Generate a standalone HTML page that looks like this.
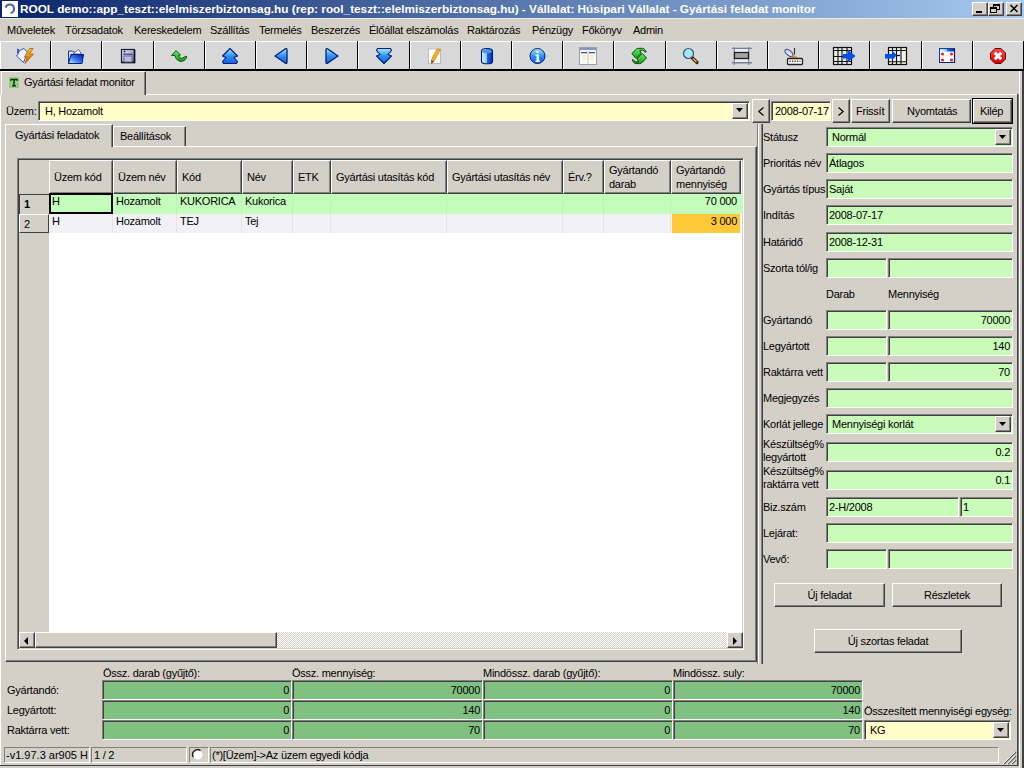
<!DOCTYPE html>
<html><head><meta charset="utf-8"><style>
*{box-sizing:border-box;margin:0;padding:0}
html,body{width:1024px;height:768px;overflow:hidden;background:#D4D0C8;font-family:"Liberation Sans",sans-serif;font-size:11px;color:#000}
.a{position:absolute}
.t{position:absolute;white-space:pre;line-height:13px;letter-spacing:-0.25px}
.btn{position:absolute;background:#D4D0C8;border-top:1px solid #fff;border-left:1px solid #fff;border-right:1px solid #404040;border-bottom:1px solid #404040;box-shadow:inset -1px -1px 0 #808080}
.sunk{position:absolute;border-top:1px solid #808080;border-left:1px solid #808080;border-right:1px solid #fff;border-bottom:1px solid #fff;box-shadow:inset 1px 1px 0 #404040}
svg{position:absolute;overflow:visible}
</style></head><body>
<div class="a" style="left:0px;top:0px;width:1024px;height:18px;background:linear-gradient(to right,#0A246A,#A6CAF0)"></div>
<div class="a" style="left:2px;top:1px;width:16px;height:16px;background:#fff"></div>
<svg style="left:2px;top:1px" width="16" height="16" viewBox="0 0 16 16"><path d="M3.6 6.6 A4.3 4.3 0 1 1 8.6 12" fill="none" stroke="#585E98" stroke-width="2"/></svg>
<div class="t" style="left:20px;top:3px;color:#fff;font-weight:bold;font-size:11.8px;letter-spacing:0">ROOL demo::app_teszt::elelmiszerbiztonsag.hu (rep: rool_teszt::elelmiszerbiztonsag.hu) - Vállalat: Húsipari Vállalat - Gyártási feladat monitor</div>
<div class="btn" style="left:972px;top:2px;width:16px;height:14px;"></div>
<div class="btn" style="left:988px;top:2px;width:16px;height:14px;"></div>
<div class="btn" style="left:1006px;top:2px;width:16px;height:14px;"></div>
<div class="a" style="left:976px;top:11px;width:6px;height:2px;background:#000"></div>
<div class="a" style="left:993px;top:4px;width:7px;height:6px;border:1px solid #000;border-top-width:2px"></div>
<div class="a" style="left:990px;top:7px;width:7px;height:6px;border:1px solid #000;border-top-width:2px;background:#D4D0C8"></div>
<svg style="left:1010px;top:5px" width="8" height="7" viewBox="0 0 8 7"><path d="M0.5 0 L7.5 7 M7.5 0 L0.5 7" stroke="#000" stroke-width="1.5"/></svg>
<div class="a" style="left:0px;top:18px;width:1024px;height:1px;background:#EAE9E2"></div>
<div class="t" style="left:7px;top:24px;">Műveletek</div>
<div class="t" style="left:65px;top:24px;">Törzsadatok</div>
<div class="t" style="left:134px;top:24px;">Kereskedelem</div>
<div class="t" style="left:210px;top:24px;">Szállítás</div>
<div class="t" style="left:259px;top:24px;">Termelés</div>
<div class="t" style="left:311px;top:24px;">Beszerzés</div>
<div class="t" style="left:369px;top:24px;">Élőállat elszámolás</div>
<div class="t" style="left:467px;top:24px;">Raktározás</div>
<div class="t" style="left:532px;top:24px;">Pénzügy</div>
<div class="t" style="left:582px;top:24px;">Főkönyv</div>
<div class="t" style="left:633px;top:24px;">Admin</div>
<div class="a" style="left:0px;top:69px;width:1024px;height:2px;background:#000"></div>
<svg width="0" height="0" style="position:absolute"><defs>
<linearGradient id="gb" x1="0" y1="0" x2="0" y2="1"><stop offset="0" stop-color="#A8E8FF"/><stop offset="0.5" stop-color="#3090F8"/><stop offset="1" stop-color="#1060E8"/></linearGradient>
<linearGradient id="gbh" x1="0" y1="0" x2="1" y2="0"><stop offset="0" stop-color="#D8F8FF"/><stop offset="0.45" stop-color="#90C8F8"/><stop offset="0.55" stop-color="#2060D0"/><stop offset="1" stop-color="#0030C0"/></linearGradient>
<linearGradient id="gg" x1="0" y1="0" x2="0" y2="1"><stop offset="0" stop-color="#60F060"/><stop offset="1" stop-color="#10A010"/></linearGradient>
<linearGradient id="go" x1="0" y1="0" x2="0" y2="1"><stop offset="0" stop-color="#FFD020"/><stop offset="1" stop-color="#C06000"/></linearGradient>
<linearGradient id="gfl" x1="0" y1="0" x2="1" y2="1"><stop offset="0" stop-color="#F4F4FF"/><stop offset="1" stop-color="#6870A8"/></linearGradient>
<linearGradient id="gfo" x1="0" y1="1" x2="1" y2="0"><stop offset="0" stop-color="#D0F8FF"/><stop offset="0.5" stop-color="#3070F0"/><stop offset="1" stop-color="#0020A8"/></linearGradient>
<linearGradient id="gr" x1="0" y1="0" x2="0" y2="1"><stop offset="0" stop-color="#FF5050"/><stop offset="1" stop-color="#D00000"/></linearGradient>
</defs></svg>
<div class="a" style="left:0px;top:41px;width:50px;height:28px;background:#D8D8D8;border-top:1px solid #fff;border-left:1px solid #fff"></div>
<div class="a" style="left:50px;top:41px;width:1px;height:29px;background:#000"></div>
<svg style="left:17px;top:48px" width="16" height="16" viewBox="0 0 16 16"><path d="M0.5 1 L2.5 2.5 L7 0.5 L10.5 4.5 L6.5 14.5 L-0.5 8 L1 6 Z" fill="#F0F2FF" stroke="#4A52A8" stroke-width="1"/><path d="M0.5 0.5 L3 2.5 L1.5 6 L0 5 Z" fill="#4858C0"/><path d="M12.5 0.5 H16 L12.5 6 H16.5 L8 15.5 L10.5 9 H7.5 Z" fill="url(#go)" stroke="#B05800" stroke-width="0.8"/></svg>
<div class="a" style="left:51px;top:41px;width:50px;height:28px;background:#D8D8D8;border-top:1px solid #fff;border-left:1px solid #fff"></div>
<div class="a" style="left:101px;top:41px;width:1px;height:29px;background:#000"></div>
<svg style="left:68px;top:48px" width="16" height="16" viewBox="0 0 16 16"><path d="M0.5 3 H4.5 L5.5 4 H7 V15.5 H0.5 Z" fill="#C8E4FF" stroke="#203890"/><path d="M5 6 L10.5 1.5 L13.5 6 Z" fill="#FFFFFF" stroke="#404880" stroke-width="0.8"/><path d="M0.5 15.5 L3 6.5 H15.5 L14 15.5 Z" fill="url(#gfo)" stroke="#001880"/></svg>
<div class="a" style="left:102px;top:41px;width:51px;height:28px;background:#D8D8D8;border-top:1px solid #fff;border-left:1px solid #fff"></div>
<div class="a" style="left:153px;top:41px;width:1px;height:29px;background:#000"></div>
<svg style="left:119px;top:48px" width="16" height="16" viewBox="0 0 16 16"><rect x="2.5" y="1.5" width="13" height="13" fill="url(#gfl)" stroke="#181838" stroke-width="1.2"/><path d="M15.5 2 V14.5 H2.5" fill="none" stroke="#0A0A20" stroke-width="1.6"/><rect x="5" y="8" width="8" height="6" fill="#B8BCD8" stroke="#58608C" stroke-width="0.8"/><rect x="4" y="5.5" width="10" height="1.5" fill="#585E90"/><circle cx="5.5" cy="3.5" r="1.1" fill="#303050"/></svg>
<div class="a" style="left:154px;top:41px;width:50px;height:28px;background:#D8D8D8;border-top:1px solid #fff;border-left:1px solid #fff"></div>
<div class="a" style="left:204px;top:41px;width:1px;height:29px;background:#000"></div>
<svg style="left:171px;top:48px" width="16" height="16" viewBox="0 0 16 16"><path d="M0.5 7.5 L5 2.5 L9.5 7 L7.5 7.5 Q8.5 10.5 11 10.5 L15 8 L16 9 Q13.5 13.5 10.5 13.5 Q5 13 4 7.5 Z" fill="url(#gg)" stroke="#004800" stroke-width="0.9"/></svg>
<div class="a" style="left:205px;top:41px;width:50px;height:28px;background:#D8D8D8;border-top:1px solid #fff;border-left:1px solid #fff"></div>
<div class="a" style="left:255px;top:41px;width:1px;height:29px;background:#000"></div>
<svg style="left:222px;top:48px" width="16" height="16" viewBox="0 0 16 16"><path d="M8 0.5 L15.5 8 L12 9.5 L15.5 13.5 L14.5 15.5 H1.5 L0.5 13.5 L4 9.5 L0.5 8 Z" fill="url(#gb)" stroke="#002070" stroke-width="1.1" stroke-linejoin="round"/></svg>
<div class="a" style="left:256px;top:41px;width:50px;height:28px;background:#D8D8D8;border-top:1px solid #fff;border-left:1px solid #fff"></div>
<div class="a" style="left:306px;top:41px;width:1px;height:29px;background:#000"></div>
<svg style="left:273px;top:48px" width="16" height="16" viewBox="0 0 16 16"><path d="M2 8 L12.5 0.8 Q14 0 14 2 V14 Q14 16 12.5 15.2 Z" fill="url(#gb)" stroke="#002070" stroke-width="1.3" stroke-linejoin="round"/></svg>
<div class="a" style="left:307px;top:41px;width:50px;height:28px;background:#D8D8D8;border-top:1px solid #fff;border-left:1px solid #fff"></div>
<div class="a" style="left:357px;top:41px;width:1px;height:29px;background:#000"></div>
<svg style="left:324px;top:48px" width="16" height="16" viewBox="0 0 16 16"><path d="M14 8 L3.5 0.8 Q2 0 2 2 V14 Q2 16 3.5 15.2 Z" fill="url(#gb)" stroke="#002070" stroke-width="1.3" stroke-linejoin="round"/></svg>
<div class="a" style="left:358px;top:41px;width:51px;height:28px;background:#D8D8D8;border-top:1px solid #fff;border-left:1px solid #fff"></div>
<div class="a" style="left:409px;top:41px;width:1px;height:29px;background:#000"></div>
<svg style="left:376px;top:48px" width="16" height="16" viewBox="0 0 16 16"><path d="M8 15.5 L15.5 8 L12 6.5 L15.5 2.5 L14.5 0.5 H1.5 L0.5 2.5 L4 6.5 L0.5 8 Z" fill="url(#gb)" stroke="#002070" stroke-width="1.1" stroke-linejoin="round"/></svg>
<div class="a" style="left:410px;top:41px;width:50px;height:28px;background:#D8D8D8;border-top:1px solid #fff;border-left:1px solid #fff"></div>
<div class="a" style="left:460px;top:41px;width:1px;height:29px;background:#000"></div>
<svg style="left:427px;top:48px" width="16" height="16" viewBox="0 0 16 16"><rect x="1.5" y="1" width="12" height="14.5" fill="#FFFFFF" stroke="#B0B0C0" stroke-width="0.8"/><path d="M10 1 L13.5 1.5 L7 13.5 L4 12.5 Z" fill="#F8B020" stroke="#C07000" stroke-width="0.6"/><path d="M4 12.5 L7 13.5 L4.5 16 Z" fill="#504030"/></svg>
<div class="a" style="left:461px;top:41px;width:50px;height:28px;background:#D8D8D8;border-top:1px solid #fff;border-left:1px solid #fff"></div>
<div class="a" style="left:511px;top:41px;width:1px;height:29px;background:#000"></div>
<svg style="left:478px;top:48px" width="16" height="16" viewBox="0 0 16 16"><path d="M3.5 3 Q3.5 0.5 9 0.5 Q14.5 0.5 14.5 3 V13.5 Q14.5 15.8 9 15.8 Q3.5 15.8 3.5 13.5 Z" fill="url(#gbh)" stroke="#001870" stroke-width="1.1"/><ellipse cx="9" cy="3.3" rx="4.8" ry="2" fill="#4898F0"/></svg>
<div class="a" style="left:512px;top:41px;width:50px;height:28px;background:#D8D8D8;border-top:1px solid #fff;border-left:1px solid #fff"></div>
<div class="a" style="left:562px;top:41px;width:1px;height:29px;background:#000"></div>
<svg style="left:529px;top:48px" width="16" height="16" viewBox="0 0 16 16"><circle cx="8.5" cy="8" r="7.5" fill="url(#gb)" stroke="#002070" stroke-width="1"/><circle cx="8.5" cy="4" r="1.3" fill="#E0F8FF"/><path d="M6.5 6.5 H10 V12.5 H11 V14 H6.5 V12.5 H7.5 V8 H6.5 Z" fill="#E8FCFF"/></svg>
<div class="a" style="left:563px;top:41px;width:50px;height:28px;background:#D8D8D8;border-top:1px solid #fff;border-left:1px solid #fff"></div>
<div class="a" style="left:613px;top:41px;width:1px;height:29px;background:#000"></div>
<svg style="left:580px;top:48px" width="16" height="16" viewBox="0 0 16 16"><rect x="-0.5" y="-0.5" width="17" height="17" fill="#FBFAF0" stroke="#98A0B8" stroke-width="1"/><rect x="0" y="0" width="16" height="2" fill="#8098C8"/><rect x="1" y="4" width="6" height="1.3" fill="#505878"/><rect x="9" y="4" width="6" height="1.3" fill="#505878"/><rect x="7.5" y="2.5" width="1" height="13.5" fill="#C0C0B8"/><path d="M2 8 H6 M2 11 H6 M10 8 H14 M10 11 H14" stroke="#E8E0D0" stroke-width="1"/></svg>
<div class="a" style="left:614px;top:41px;width:51px;height:28px;background:#D8D8D8;border-top:1px solid #fff;border-left:1px solid #fff"></div>
<div class="a" style="left:665px;top:41px;width:1px;height:29px;background:#000"></div>
<svg style="left:631px;top:48px" width="16" height="16" viewBox="0 0 16 16"><path d="M0.8 5.5 L5.5 1 Q6.5 0.3 8 0.3 H11.5 Q12.5 0.3 13.2 1 L15.3 3.8 L14.2 4.3 L12 2.2 H8.8 L10.2 5.5 L5 10.5 Z" fill="url(#gg)" stroke="#003800" stroke-width="0.9" stroke-linejoin="round"/><path d="M15.5 10 L10.8 14.8 Q9.8 15.6 8.3 15.6 H4.8 Q3.8 15.6 3.1 14.8 L1 12 L2.1 11.6 L4.3 13.8 H7.5 L6.1 10.5 L11.3 5.5 Z" fill="url(#gg)" stroke="#003800" stroke-width="0.9" stroke-linejoin="round"/></svg>
<div class="a" style="left:666px;top:41px;width:50px;height:28px;background:#D8D8D8;border-top:1px solid #fff;border-left:1px solid #fff"></div>
<div class="a" style="left:716px;top:41px;width:1px;height:29px;background:#000"></div>
<svg style="left:682px;top:48px" width="16" height="16" viewBox="0 0 16 16"><path d="M10.5 10 L15 14.5" stroke="#402000" stroke-width="3.2" stroke-linecap="round"/><path d="M11 10.5 L14.5 14" stroke="#E8B878" stroke-width="1.3"/><circle cx="6.5" cy="5.5" r="5" fill="#A8E4F8" stroke="#305868" stroke-width="1.2"/></svg>
<div class="a" style="left:717px;top:41px;width:50px;height:28px;background:#D8D8D8;border-top:1px solid #fff;border-left:1px solid #fff"></div>
<div class="a" style="left:767px;top:41px;width:1px;height:29px;background:#000"></div>
<svg style="left:733px;top:48px" width="16" height="16" viewBox="0 0 16 16"><rect x="1.5" y="1" width="14" height="13" fill="#ECECF4"/><path d="M1.3 -1 V17 M15.6 -1 V17" stroke="#8088A8" stroke-width="1.2"/><path d="M-1 0.4 H19 M-1 14.7 H19" stroke="#787C98" stroke-width="1.4"/><rect x="1.5" y="4.5" width="14" height="6" fill="#A4A4A0" stroke="#202020" stroke-width="1.3"/></svg>
<div class="a" style="left:768px;top:41px;width:50px;height:28px;background:#D8D8D8;border-top:1px solid #fff;border-left:1px solid #fff"></div>
<div class="a" style="left:818px;top:41px;width:1px;height:29px;background:#000"></div>
<svg style="left:784px;top:48px" width="16" height="16" viewBox="0 0 16 16"><ellipse cx="5" cy="5" rx="4.8" ry="2.4" transform="rotate(40 5 5)" fill="#D8E0F8" stroke="#3A4A90" stroke-width="1"/><path d="M10.5 0 V6.5" stroke="#303030" stroke-width="1.1"/><path d="M7 10.5 Q10.5 4.5 14.5 10.5 Z" fill="#F09830"/><rect x="3.5" y="10.5" width="15" height="6" rx="1" fill="#FFFFFF" stroke="#202020" stroke-width="1.3"/><path d="M5.5 13.2 H16.5" stroke="#404040" stroke-width="1.4" stroke-dasharray="1.3 1.2"/></svg>
<div class="a" style="left:819px;top:41px;width:50px;height:28px;background:#D8D8D8;border-top:1px solid #fff;border-left:1px solid #fff"></div>
<div class="a" style="left:869px;top:41px;width:1px;height:29px;background:#000"></div>
<svg style="left:836px;top:48px" width="16" height="16" viewBox="0 0 16 16"><rect x="-2.5" y="-0.5" width="18" height="17" fill="#EAEAE4" stroke="#101010" stroke-width="1.2"/><path d="M-2.5 2.5 H15.5 M-2.5 8.5 H15.5 M-2.5 13.5 H15.5 M6 -0.5 V16.5 M11 -0.5 V16.5 M2 -0.5 V16.5" stroke="#101010" stroke-width="1.1"/><path d="M7 6 H12 V2 L19.5 8 L12 14 V10.5 H7 Z" fill="#0050F0"/></svg>
<div class="a" style="left:870px;top:41px;width:51px;height:28px;background:#D8D8D8;border-top:1px solid #fff;border-left:1px solid #fff"></div>
<div class="a" style="left:921px;top:41px;width:1px;height:29px;background:#000"></div>
<svg style="left:887px;top:48px" width="16" height="16" viewBox="0 0 16 16"><rect x="1.5" y="-0.5" width="18" height="17" fill="#F2F2EC" stroke="#101010" stroke-width="1.2"/><path d="M1.5 2.5 H19.5 M1.5 13.8 H19.5 M9.5 -0.5 V16.5 M14 -0.5 V16.5 M5.5 -0.5 V16.5" stroke="#101010" stroke-width="1.1"/><path d="M9.5 7.5 H13" stroke="#101010" stroke-width="1.2"/><path d="M-2 6 H5 V2.2 L9.8 7.3 L5 12.3 V10.4 H-2 Z" fill="#0050F0"/></svg>
<div class="a" style="left:922px;top:41px;width:50px;height:28px;background:#D8D8D8;border-top:1px solid #fff;border-left:1px solid #fff"></div>
<div class="a" style="left:972px;top:41px;width:1px;height:29px;background:#000"></div>
<svg style="left:938px;top:48px" width="16" height="16" viewBox="0 0 16 16"><rect x="1.5" y="0.5" width="15" height="14" fill="#FFFFFF" stroke="#1838A8" stroke-width="1"/><rect x="2" y="1" width="14" height="2.5" fill="url(#gbh)"/><path d="M16.5 0.5 V14.5 H1.5" fill="none" stroke="#102070" stroke-width="1.2"/><circle cx="4.5" cy="6" r="1.6" fill="#D83020"/><circle cx="13.5" cy="6" r="1.6" fill="#D83020"/><circle cx="4.5" cy="12" r="1.6" fill="#D03020"/><circle cx="13.5" cy="12" r="1.6" fill="#D03020"/></svg>
<div class="a" style="left:973px;top:41px;width:50px;height:28px;background:#D8D8D8;border-top:1px solid #fff;border-left:1px solid #fff"></div>
<div class="a" style="left:1023px;top:41px;width:1px;height:29px;background:#000"></div>
<svg style="left:990px;top:48px" width="16" height="16" viewBox="0 0 16 16"><path d="M5 0.5 H11 L15.5 5 V11 L11 15.5 H5 L0.5 11 V5 Z" fill="url(#gr)" stroke="#700000" stroke-width="1"/><path d="M4.8 4.8 L11.2 11.2 M11.2 4.8 L4.8 11.2" stroke="#FFFFFF" stroke-width="3"/></svg>
<div class="a" style="left:0px;top:71px;width:1024px;height:697px;background:#D4D0C8"></div>
<div class="a" style="left:1px;top:71px;width:145px;height:24px;border-top:1px solid #fff;border-left:1px solid #fff;border-right:1px solid #404040;box-shadow:inset -1px 0 0 #808080"></div>
<div class="a" style="left:146px;top:94px;width:871px;height:1px;background:#fff"></div>
<svg style="left:9px;top:77px" width="10" height="11" viewBox="0 0 10 11"><rect width="10" height="11" fill="#90CC80"/><path d="M1.8 2.5 H8.2 M5 2.5 V8.8 M3.2 8.8 H6.8" stroke="#003000" stroke-width="1.4" fill="none"/><path d="M1.8 2 V4 M8.2 2 V4" stroke="#003000" stroke-width="1"/></svg>
<div class="t" style="left:24px;top:76px;">Gyártási feladat monitor</div>
<div class="a" style="left:1017px;top:94px;width:1px;height:672px;background:#404040"></div>
<div class="a" style="left:1018px;top:94px;width:1px;height:672px;background:#808080"></div>
<div class="a" style="left:1019px;top:71px;width:1px;height:697px;background:#fff"></div>
<div class="a" style="left:1022px;top:71px;width:2px;height:697px;background:#404040"></div>
<div class="a" style="left:0px;top:765px;width:1018px;height:1px;background:#404040"></div>
<div class="a" style="left:0px;top:95px;width:1px;height:670px;background:#fff"></div>
<div class="t" style="left:6px;top:105px;">Üzem:</div>
<div class="sunk" style="left:38px;top:101px;width:712px;height:20px;background:#FFFDC8;"></div>
<div class="t" style="left:45px;top:105px;">H, Hozamolt</div>
<div class="btn" style="left:732px;top:103px;width:16px;height:16px;"></div>
<svg style="left:736px;top:108px" width="8" height="5" viewBox="0 0 8 5"><path d="M0 0 H7 L3.5 4 Z" fill="#000"/></svg>
<div class="btn" style="left:752px;top:99px;width:18px;height:24px;"></div>
<svg style="left:758px;top:107px" width="6" height="9" viewBox="0 0 6 9"><path d="M5.5 0.5 L0.8 4.5 L5.5 8.5" fill="none" stroke="#000" stroke-width="1.1"/></svg>
<div class="sunk" style="left:771px;top:101px;width:60px;height:20px;background:#FFFDC8;"></div>
<div class="t" style="left:775px;top:105px;">2008-07-17</div>
<div class="btn" style="left:832px;top:99px;width:18px;height:24px;"></div>
<svg style="left:838px;top:107px" width="6" height="9" viewBox="0 0 6 9"><path d="M0.5 0.5 L5.2 4.5 L0.5 8.5" fill="none" stroke="#000" stroke-width="1.1"/></svg>
<div class="btn" style="left:851px;top:99px;width:39px;height:24px;"></div>
<div class="t" style="left:856px;top:105px;">Frissít</div>
<div class="btn" style="left:892px;top:99px;width:79px;height:24px;"></div>
<div class="t" style="left:907px;top:105px;">Nyomtatás</div>
<div class="a" style="left:972px;top:98px;width:41px;height:26px;border:1px solid #000"></div>
<div class="btn" style="left:973px;top:99px;width:39px;height:24px;"></div>
<div class="t" style="left:980px;top:105px;">Kilép</div>
<div class="a" style="left:5px;top:146px;width:752px;height:516px;border-top:1px solid #fff;border-left:1px solid #fff;border-right:1px solid #404040;border-bottom:1px solid #404040;box-shadow:inset -1px -1px 0 #808080"></div>
<div class="a" style="left:5px;top:124px;width:108px;height:23px;background:#D4D0C8;border-top:1px solid #fff;border-left:1px solid #fff;border-right:1px solid #404040;box-shadow:inset -1px 0 0 #808080"></div>
<div class="t" style="left:15px;top:129px;">Gyártási feladatok</div>
<div class="a" style="left:113px;top:126px;width:73px;height:20px;background:#D4D0C8;border-top:1px solid #fff;border-left:1px solid #fff;border-right:1px solid #404040;box-shadow:inset -1px 0 0 #808080"></div>
<div class="t" style="left:120px;top:130px;">Beállítások</div>
<div class="a" style="left:757px;top:124px;width:1px;height:540px;background:#808080"></div>
<div class="a" style="left:758px;top:124px;width:1px;height:540px;background:#fff"></div>
<div class="a" style="left:761px;top:124px;width:1px;height:540px;background:#808080"></div>
<div class="a" style="left:762px;top:124px;width:1px;height:540px;background:#404040"></div>
<div class="a" style="left:17px;top:158px;width:727px;height:492px;background:#fff;border-top:1px solid #808080;border-left:1px solid #808080;border-right:1px solid #fff;border-bottom:1px solid #fff;box-shadow:inset 1px 1px 0 #404040,inset -1px -1px 0 #D4D0C8"></div>
<div class="a" style="left:19px;top:160px;width:30px;height:472px;background:#D4D0C8"></div>
<div class="a" style="left:19px;top:160px;width:722px;height:34px;background:#D4D0C8"></div>
<div class="a" style="left:49px;top:160px;width:64px;height:34px;border-top:1px solid #fff;border-left:1px solid #fff;border-right:1px solid #404040;border-bottom:1px solid #404040;box-shadow:inset -1px -1px 0 #808080"></div>
<div class="t" style="left:54px;top:171px;">Üzem kód</div>
<div class="a" style="left:113px;top:160px;width:64px;height:34px;border-top:1px solid #fff;border-left:1px solid #fff;border-right:1px solid #404040;border-bottom:1px solid #404040;box-shadow:inset -1px -1px 0 #808080"></div>
<div class="t" style="left:118px;top:171px;">Üzem név</div>
<div class="a" style="left:177px;top:160px;width:65px;height:34px;border-top:1px solid #fff;border-left:1px solid #fff;border-right:1px solid #404040;border-bottom:1px solid #404040;box-shadow:inset -1px -1px 0 #808080"></div>
<div class="t" style="left:182px;top:171px;">Kód</div>
<div class="a" style="left:242px;top:160px;width:51px;height:34px;border-top:1px solid #fff;border-left:1px solid #fff;border-right:1px solid #404040;border-bottom:1px solid #404040;box-shadow:inset -1px -1px 0 #808080"></div>
<div class="t" style="left:247px;top:171px;">Név</div>
<div class="a" style="left:293px;top:160px;width:38px;height:34px;border-top:1px solid #fff;border-left:1px solid #fff;border-right:1px solid #404040;border-bottom:1px solid #404040;box-shadow:inset -1px -1px 0 #808080"></div>
<div class="t" style="left:298px;top:171px;">ETK</div>
<div class="a" style="left:331px;top:160px;width:116px;height:34px;border-top:1px solid #fff;border-left:1px solid #fff;border-right:1px solid #404040;border-bottom:1px solid #404040;box-shadow:inset -1px -1px 0 #808080"></div>
<div class="t" style="left:336px;top:171px;">Gyártási utasítás kód</div>
<div class="a" style="left:447px;top:160px;width:116px;height:34px;border-top:1px solid #fff;border-left:1px solid #fff;border-right:1px solid #404040;border-bottom:1px solid #404040;box-shadow:inset -1px -1px 0 #808080"></div>
<div class="t" style="left:452px;top:171px;">Gyártási utasítás név</div>
<div class="a" style="left:563px;top:160px;width:41px;height:34px;border-top:1px solid #fff;border-left:1px solid #fff;border-right:1px solid #404040;border-bottom:1px solid #404040;box-shadow:inset -1px -1px 0 #808080"></div>
<div class="t" style="left:568px;top:171px;">Érv.?</div>
<div class="a" style="left:604px;top:160px;width:67px;height:34px;border-top:1px solid #fff;border-left:1px solid #fff;border-right:1px solid #404040;border-bottom:1px solid #404040;box-shadow:inset -1px -1px 0 #808080"></div>
<div class="t" style="left:609px;top:164px;">Gyártandó</div>
<div class="t" style="left:609px;top:178px;">darab</div>
<div class="a" style="left:671px;top:160px;width:70px;height:34px;border-top:1px solid #fff;border-left:1px solid #fff;border-right:1px solid #404040;border-bottom:1px solid #404040;box-shadow:inset -1px -1px 0 #808080"></div>
<div class="t" style="left:676px;top:164px;">Gyártandó</div>
<div class="t" style="left:676px;top:178px;">mennyiség</div>
<div class="a" style="left:49px;top:194px;width:694px;height:20px;background:#C4FCBC"></div>
<div class="a" style="left:49px;top:214px;width:692px;height:19px;background:#F2F2F6"></div>
<div class="a" style="left:112px;top:214px;width:1px;height:19px;background:#E4E4E4"></div>
<div class="a" style="left:112px;top:194px;width:1px;height:20px;background:#BCF4B4"></div>
<div class="a" style="left:176px;top:214px;width:1px;height:19px;background:#E4E4E4"></div>
<div class="a" style="left:176px;top:194px;width:1px;height:20px;background:#BCF4B4"></div>
<div class="a" style="left:241px;top:214px;width:1px;height:19px;background:#E4E4E4"></div>
<div class="a" style="left:241px;top:194px;width:1px;height:20px;background:#BCF4B4"></div>
<div class="a" style="left:292px;top:214px;width:1px;height:19px;background:#E4E4E4"></div>
<div class="a" style="left:292px;top:194px;width:1px;height:20px;background:#BCF4B4"></div>
<div class="a" style="left:330px;top:214px;width:1px;height:19px;background:#E4E4E4"></div>
<div class="a" style="left:330px;top:194px;width:1px;height:20px;background:#BCF4B4"></div>
<div class="a" style="left:446px;top:214px;width:1px;height:19px;background:#E4E4E4"></div>
<div class="a" style="left:446px;top:194px;width:1px;height:20px;background:#BCF4B4"></div>
<div class="a" style="left:562px;top:214px;width:1px;height:19px;background:#E4E4E4"></div>
<div class="a" style="left:562px;top:194px;width:1px;height:20px;background:#BCF4B4"></div>
<div class="a" style="left:603px;top:214px;width:1px;height:19px;background:#E4E4E4"></div>
<div class="a" style="left:603px;top:194px;width:1px;height:20px;background:#BCF4B4"></div>
<div class="a" style="left:670px;top:214px;width:1px;height:19px;background:#E4E4E4"></div>
<div class="a" style="left:670px;top:194px;width:1px;height:20px;background:#BCF4B4"></div>
<div class="a" style="left:672px;top:214px;width:68px;height:19px;background:#FFC838"></div>
<div class="a" style="left:19px;top:194px;width:30px;height:1px;background:#404040"></div>
<div class="a" style="left:19px;top:194px;width:1px;height:20px;background:#404040"></div>
<div class="a" style="left:19px;top:214px;width:30px;height:19px;border-top:1px solid #fff;border-left:1px solid #fff;border-right:1px solid #404040;border-bottom:1px solid #404040"></div>
<div class="t" style="left:24px;top:198px;font-weight:bold">1</div>
<div class="t" style="left:24px;top:218px;">2</div>
<div class="a" style="left:49px;top:193px;width:64px;height:21px;border:2px solid #000"></div>
<div class="t" style="left:52px;top:195px;">H</div>
<div class="t" style="left:52px;top:215px;">H</div>
<div class="t" style="left:116px;top:195px;">Hozamolt</div>
<div class="t" style="left:116px;top:215px;">Hozamolt</div>
<div class="t" style="left:180px;top:195px;">KUKORICA</div>
<div class="t" style="left:180px;top:215px;">TEJ</div>
<div class="t" style="left:245px;top:195px;">Kukorica</div>
<div class="t" style="left:245px;top:215px;">Tej</div>
<div class="t" style="left:640px;top:195px;width:97px;text-align:right">70 000</div>
<div class="t" style="left:640px;top:215px;width:97px;text-align:right">3 000</div>
<div class="a" style="left:20px;top:632px;width:722px;height:16px;background:repeating-conic-gradient(#D4D0C8 0 25%,#fff 0 50%) 0 0/2px 2px"></div>
<div class="btn" style="left:19px;top:632px;width:16px;height:16px;"></div>
<svg style="left:24px;top:637px" width="5" height="8" viewBox="0 0 5 8"><path d="M4 0 V8 L0 4 Z" fill="#000"/></svg>
<div class="btn" style="left:35px;top:632px;width:242px;height:16px;"></div>
<div class="btn" style="left:727px;top:632px;width:16px;height:16px;"></div>
<svg style="left:733px;top:637px" width="5" height="8" viewBox="0 0 5 8"><path d="M0 0 V8 L4 4 Z" fill="#000"/></svg>
<div class="t" style="left:763px;top:131px;">Státusz</div>
<div class="sunk" style="left:826px;top:127px;width:187px;height:20px;background:#C8FCB8;"></div>
<div class="t" style="left:832px;top:131px;">Normál</div>
<div class="btn" style="left:995px;top:129px;width:16px;height:16px;"></div>
<svg style="left:999px;top:135px" width="8" height="5" viewBox="0 0 8 5"><path d="M0 0 H7 L3.5 4 Z" fill="#000"/></svg>
<div class="t" style="left:763px;top:157px;">Prioritás név</div>
<div class="sunk" style="left:826px;top:153px;width:187px;height:20px;background:#C8FCB8;"></div>
<div class="t" style="left:829px;top:157px;">Átlagos</div>
<div class="t" style="left:763px;top:183px;">Gyártás típus</div>
<div class="sunk" style="left:826px;top:179px;width:187px;height:20px;background:#C8FCB8;"></div>
<div class="t" style="left:829px;top:183px;">Saját</div>
<div class="t" style="left:763px;top:209px;">Indítás</div>
<div class="sunk" style="left:826px;top:205px;width:187px;height:20px;background:#C8FCB8;"></div>
<div class="t" style="left:829px;top:209px;">2008-07-17</div>
<div class="t" style="left:763px;top:236px;">Határidő</div>
<div class="sunk" style="left:826px;top:232px;width:187px;height:20px;background:#C8FCB8;"></div>
<div class="t" style="left:829px;top:236px;">2008-12-31</div>
<div class="t" style="left:763px;top:262px;">Szorta tól/ig</div>
<div class="sunk" style="left:826px;top:258px;width:61px;height:20px;background:#C8FCB8;"></div>
<div class="sunk" style="left:888px;top:258px;width:125px;height:20px;background:#C8FCB8;"></div>
<div class="t" style="left:826px;top:288px;">Darab</div>
<div class="t" style="left:888px;top:288px;">Mennyiség</div>
<div class="t" style="left:763px;top:314px;">Gyártandó</div>
<div class="sunk" style="left:826px;top:310px;width:61px;height:20px;background:#C8FCB8;"></div>
<div class="sunk" style="left:888px;top:310px;width:125px;height:20px;background:#C8FCB8;"></div>
<div class="t" style="left:888px;top:314px;width:122px;text-align:right">70000</div>
<div class="t" style="left:763px;top:340px;">Legyártott</div>
<div class="sunk" style="left:826px;top:336px;width:61px;height:20px;background:#C8FCB8;"></div>
<div class="sunk" style="left:888px;top:336px;width:125px;height:20px;background:#C8FCB8;"></div>
<div class="t" style="left:888px;top:340px;width:122px;text-align:right">140</div>
<div class="t" style="left:763px;top:366px;">Raktárra vett</div>
<div class="sunk" style="left:826px;top:362px;width:61px;height:20px;background:#C8FCB8;"></div>
<div class="sunk" style="left:888px;top:362px;width:125px;height:20px;background:#C8FCB8;"></div>
<div class="t" style="left:888px;top:366px;width:122px;text-align:right">70</div>
<div class="t" style="left:763px;top:392px;">Megjegyzés</div>
<div class="sunk" style="left:826px;top:388px;width:187px;height:20px;background:#C8FCB8;"></div>
<div class="t" style="left:763px;top:418px;">Korlát jellege</div>
<div class="sunk" style="left:826px;top:414px;width:187px;height:20px;background:#C8FCB8;"></div>
<div class="t" style="left:832px;top:418px;">Mennyiségi korlát</div>
<div class="btn" style="left:995px;top:416px;width:16px;height:16px;"></div>
<svg style="left:999px;top:422px" width="8" height="5" viewBox="0 0 8 5"><path d="M0 0 H7 L3.5 4 Z" fill="#000"/></svg>
<div class="t" style="left:763px;top:438px;line-height:13px">Készültség%
legyártott</div>
<div class="sunk" style="left:826px;top:442px;width:187px;height:20px;background:#C8FCB8;"></div>
<div class="t" style="left:826px;top:446px;width:184px;text-align:right">0.2</div>
<div class="t" style="left:763px;top:465px;line-height:13px">Készültség%
raktárra vett</div>
<div class="sunk" style="left:826px;top:470px;width:187px;height:20px;background:#C8FCB8;"></div>
<div class="t" style="left:826px;top:474px;width:184px;text-align:right">0.1</div>
<div class="t" style="left:763px;top:501px;">Biz.szám</div>
<div class="sunk" style="left:826px;top:497px;width:133px;height:20px;background:#C8FCB8;"></div>
<div class="t" style="left:829px;top:501px;">2-H/2008</div>
<div class="sunk" style="left:960px;top:497px;width:53px;height:20px;background:#C8FCB8;"></div>
<div class="t" style="left:963px;top:501px;">1</div>
<div class="t" style="left:763px;top:527px;">Lejárat:</div>
<div class="sunk" style="left:826px;top:523px;width:187px;height:20px;background:#C8FCB8;"></div>
<div class="t" style="left:763px;top:553px;">Vevő:</div>
<div class="sunk" style="left:826px;top:549px;width:61px;height:20px;background:#C8FCB8;"></div>
<div class="sunk" style="left:888px;top:549px;width:125px;height:20px;background:#C8FCB8;"></div>
<div class="btn" style="left:774px;top:583px;width:111px;height:24px;"></div>
<div class="t" style="left:774px;top:589px;width:111px;text-align:center">Új feladat</div>
<div class="btn" style="left:892px;top:583px;width:110px;height:24px;"></div>
<div class="t" style="left:892px;top:589px;width:110px;text-align:center">Részletek</div>
<div class="btn" style="left:814px;top:629px;width:148px;height:24px;"></div>
<div class="t" style="left:814px;top:635px;width:148px;text-align:center">Új szortas feladat</div>
<div class="t" style="left:103px;top:667px;">Össz. darab (gyűjtő):</div>
<div class="t" style="left:292px;top:667px;">Össz. mennyiség:</div>
<div class="t" style="left:483px;top:667px;">Mindössz. darab (gyűjtő):</div>
<div class="t" style="left:673px;top:667px;">Mindössz. suly:</div>
<div class="t" style="left:7px;top:684px;">Gyártandó:</div>
<div class="sunk" style="left:102px;top:680px;width:190px;height:20px;background:#80C080;"></div>
<div class="t" style="left:102px;top:684px;width:187px;text-align:right">0</div>
<div class="sunk" style="left:292px;top:680px;width:191px;height:20px;background:#80C080;"></div>
<div class="t" style="left:292px;top:684px;width:188px;text-align:right">70000</div>
<div class="sunk" style="left:483px;top:680px;width:190px;height:20px;background:#80C080;"></div>
<div class="t" style="left:483px;top:684px;width:187px;text-align:right">0</div>
<div class="sunk" style="left:673px;top:680px;width:190px;height:20px;background:#80C080;"></div>
<div class="t" style="left:673px;top:684px;width:187px;text-align:right">70000</div>
<div class="t" style="left:7px;top:704px;">Legyártott:</div>
<div class="sunk" style="left:102px;top:700px;width:190px;height:20px;background:#80C080;"></div>
<div class="t" style="left:102px;top:704px;width:187px;text-align:right">0</div>
<div class="sunk" style="left:292px;top:700px;width:191px;height:20px;background:#80C080;"></div>
<div class="t" style="left:292px;top:704px;width:188px;text-align:right">140</div>
<div class="sunk" style="left:483px;top:700px;width:190px;height:20px;background:#80C080;"></div>
<div class="t" style="left:483px;top:704px;width:187px;text-align:right">0</div>
<div class="sunk" style="left:673px;top:700px;width:190px;height:20px;background:#80C080;"></div>
<div class="t" style="left:673px;top:704px;width:187px;text-align:right">140</div>
<div class="t" style="left:7px;top:724px;">Raktárra vett:</div>
<div class="sunk" style="left:102px;top:720px;width:190px;height:20px;background:#80C080;"></div>
<div class="t" style="left:102px;top:724px;width:187px;text-align:right">0</div>
<div class="sunk" style="left:292px;top:720px;width:191px;height:20px;background:#80C080;"></div>
<div class="t" style="left:292px;top:724px;width:188px;text-align:right">70</div>
<div class="sunk" style="left:483px;top:720px;width:190px;height:20px;background:#80C080;"></div>
<div class="t" style="left:483px;top:724px;width:187px;text-align:right">0</div>
<div class="sunk" style="left:673px;top:720px;width:190px;height:20px;background:#80C080;"></div>
<div class="t" style="left:673px;top:724px;width:187px;text-align:right">70</div>
<div class="t" style="left:864px;top:705px;">Összesített mennyiségi egység:</div>
<div class="sunk" style="left:864px;top:720px;width:147px;height:20px;background:#FFFDC8;"></div>
<div class="t" style="left:870px;top:724px;">KG</div>
<div class="btn" style="left:993px;top:722px;width:16px;height:16px;"></div>
<svg style="left:997px;top:728px" width="8" height="5" viewBox="0 0 8 5"><path d="M0 0 H7 L3.5 4 Z" fill="#000"/></svg>
<div class="a" style="left:4px;top:747px;width:86px;height:16px;border-top:1px solid #808080;border-left:1px solid #808080;border-right:1px solid #fff;border-bottom:1px solid #fff"></div>
<div class="a" style="left:91px;top:747px;width:96px;height:16px;border-top:1px solid #808080;border-left:1px solid #808080;border-right:1px solid #fff;border-bottom:1px solid #fff"></div>
<div class="a" style="left:189px;top:747px;width:20px;height:16px;border-top:1px solid #808080;border-left:1px solid #808080;border-right:1px solid #fff;border-bottom:1px solid #fff"></div>
<div class="a" style="left:210px;top:747px;width:789px;height:16px;border-top:1px solid #808080;border-left:1px solid #808080;border-right:1px solid #fff;border-bottom:1px solid #fff"></div>
<div class="t" style="left:6px;top:749px;letter-spacing:0">-v1.97.3 ar905 H</div>
<div class="t" style="left:94px;top:749px;">1 / 2</div>
<svg style="left:191px;top:748px" width="16" height="14" viewBox="0 0 16 14"><circle cx="6.8" cy="7" r="5" fill="#fff" stroke="#C8C8C8" stroke-width="0.6"/><path d="M2.3 9.2 A5 5 0 0 1 9.5 2.6" fill="none" stroke="#202020" stroke-width="1.4"/></svg>
<div class="t" style="left:212px;top:749px;">(*)[Üzem]->Az üzem egyedi kódja</div>
<svg style="left:1003px;top:751px" width="13" height="13" viewBox="0 0 13 13"><path d="M13 1 L1 13 M13 5 L5 13 M13 9 L9 13" stroke="#606060" stroke-width="1.5"/><path d="M12 1 L0 13 M12 5 L4 13 M12 9 L8 13" stroke="#fff" stroke-width="0.9"/></svg>
</body></html>
